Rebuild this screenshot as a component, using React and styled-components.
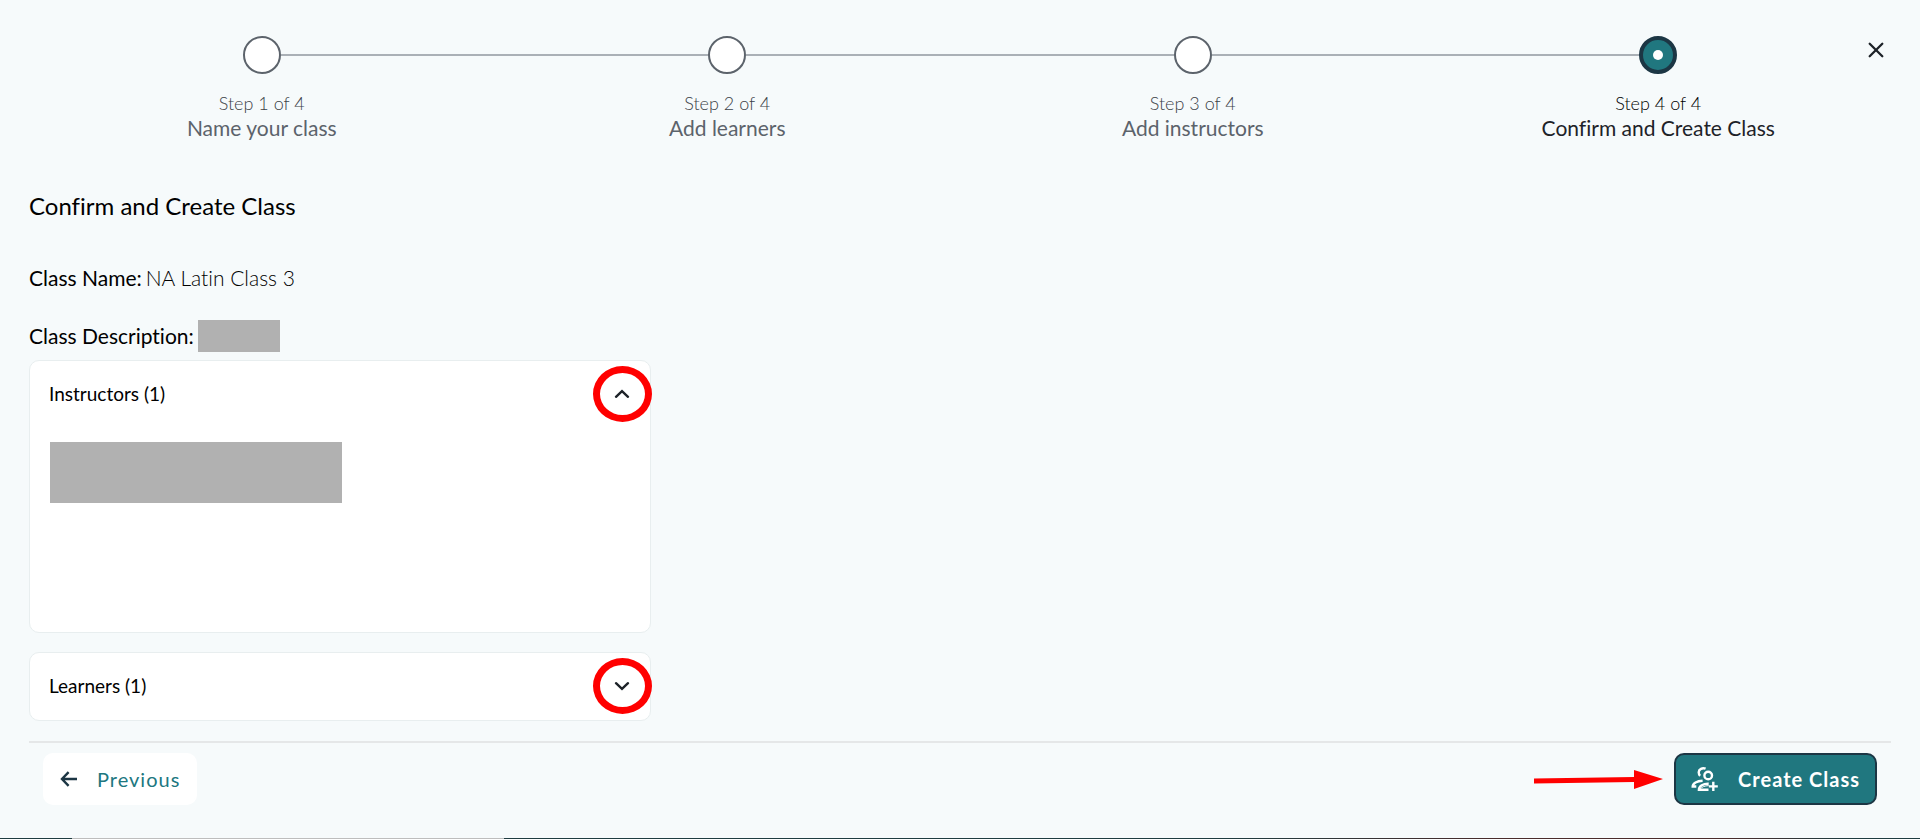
import styled, { createGlobalStyle } from "styled-components";
import { useState } from "react";

const steps = [
  "Name your class",
  "Add learners",
  "Add instructors",
  "Confirm and Create Class",
];

const CloseIcon = () => (
  <svg width="16" height="16" viewBox="0 0 16 16" fill="none" stroke="#1d2228" strokeWidth="2.3" strokeLinecap="round">
    <path d="M1.7 1.7 14.3 14.3M14.3 1.7 1.7 14.3" />
  </svg>
);

const ChevronIcon = ({ open }) => (
  <svg width="16" height="10" viewBox="0 0 16 10" fill="none" stroke="#1d2228" strokeWidth="2.4" strokeLinecap="round">
    <path d={open ? "M2 7.800 8 2.200 14 7.800" : "M2 2.200 8 7.800 14 2.200"} />
  </svg>
);

const BackIcon = () => (
  <svg width="18" height="16" viewBox="0 0 18 16" fill="none" stroke="#1c3644" strokeWidth="2.4">
    <path d="M17 8H2M8.600 1.200 2 8l6.600 6.800" />
  </svg>
);

const AddGroupIcon = () => (
  <svg width="28" height="26" viewBox="0 0 28 26" fill="none" stroke="#fff" strokeWidth="2.4">
    <circle cx="17.200" cy="9.500" r="3.800" />
    <path d="M14.600 2.700C11.300 1.400 7.800 3.300 7.700 6.300c0 1.400.4 2.500 1.400 3.500" />
    <path d="M11.600 14.700C6 15 1.700 17.300 1.700 20.500h3.600" />
    <path d="M17.700 17.800C12.300 17.600 7.900 19.800 7.900 23.700h9.600" />
    <path d="M9 23.300c1.400-2.300 4.700-3.500 8.700-3.700" strokeWidth="1" />
    <path d="M22.300 15.800v9.200M17.800 20.400h9" />
  </svg>
);

export default function App() {
  const [openPanels, setOpenPanels] = useState({ instructors: true, learners: false });

  const togglePanel = (name) =>
    setOpenPanels({ ...openPanels, [name]: !openPanels[name] });

  return (
    <>
      <GlobalStyle />
      <Page>
        <CloseButton type="button" aria-label="Close">
          <CloseIcon />
        </CloseButton>

        <Stepper>
          {steps.map((label, i) => {
            const active = i === steps.length - 1;
            return (
              <Step key={label} $active={active}>
                <StepTrack $first={i === 0} $last={active}>
                  <StepCircle $active={active} />
                </StepTrack>
                <StepCount $active={active}>
                  Step {i + 1} of {steps.length}
                </StepCount>
                <StepLabel>{label}</StepLabel>
              </Step>
            );
          })}
        </Stepper>

        <Title>Confirm and Create Class</Title>

        <Detail>
          <dt>Class Name:</dt>
          <dd>NA Latin Class 3</dd>
        </Detail>
        <Detail>
          <dt>Class Description:</dt>
          <Redacted as="dd" $width={82} $height={32} />
        </Detail>

        <Panels>
          <Panel>
            <PanelHeader
              type="button"
              aria-expanded={openPanels.instructors}
              onClick={() => togglePanel("instructors")}
            >
              Instructors (1)
              <Marker>
                <ChevronIcon open={openPanels.instructors} />
              </Marker>
            </PanelHeader>
            {openPanels.instructors ? (
              <PanelBody>
                <Redacted $width={292} $height={61} />
              </PanelBody>
            ) : null}
          </Panel>

          <Panel>
            <PanelHeader
              type="button"
              aria-expanded={openPanels.learners}
              onClick={() => togglePanel("learners")}
            >
              Learners (1)
              <Marker>
                <ChevronIcon open={openPanels.learners} />
              </Marker>
            </PanelHeader>
            {openPanels.learners ? <PanelBody /> : null}
          </Panel>
        </Panels>

        <Footer>
          <Button type="button">
            <BackIcon />
            Previous
          </Button>
          <CreateGroup>
            <svg width="130" height="22" viewBox="0 0 130 22" fill="#f00">
              <path d="M0 10.500 100 9V2l29 9-29 10v-7L0 15.500z" />
            </svg>
            <Button type="button" $primary>
              <AddGroupIcon />
              Create Class
            </Button>
          </CreateGroup>
        </Footer>
      </Page>
      <BottomEdge />
    </>
  );
}

const GlobalStyle = createGlobalStyle`
  * {
    box-sizing: border-box;
  }

  body {
    margin: 0;
    background-color: #f6fafb;
    color: #000;
    font-family: Lato, "Open Sans", sans-serif;
    font-size: 19px;
    font-variant-ligatures: none;
    line-height: 24px;
  }

  button {
    font: inherit;
    color: inherit;
    cursor: pointer;
  }
`;

const Page = styled.main`
  position: relative;
  padding: 36px 29px 33px;
`;

const CloseButton = styled.button`
  position: absolute;
  top: 34px;
  right: 28px;
  display: grid;
  place-items: center;
  width: 32px;
  height: 32px;
  padding: 0;
  border: none;
  background: none;
`;

const Stepper = styled.ol`
  display: grid;
  grid-template-columns: repeat(4, 1fr);
  margin: 0;
  padding: 0;
  list-style: none;
`;

const Step = styled.li`
  color: ${({ $active }) => ($active ? "#1d2228" : "#5c636b")};
  text-align: center;
`;

const StepTrack = styled.div`
  display: flex;
  align-items: center;
  margin-bottom: 17px;

  &::before,
  &::after {
    content: "";
    flex: 1;
    height: 2px;
    background-color: #aab0b6;
  }

  &::before {
    visibility: ${({ $first }) => ($first ? "hidden" : "visible")};
  }

  &::after {
    visibility: ${({ $last }) => ($last ? "hidden" : "visible")};
  }
`;

const StepCircle = styled.span`
  display: grid;
  place-items: center;
  width: 38px;
  height: 38px;
  border: ${({ $active }) => ($active ? "4px solid #1c3644" : "2px solid #5c636b")};
  border-radius: 50%;
  background-color: ${({ $active }) => ($active ? "#20777f" : "#fff")};

  &::after {
    content: "";
    width: 10px;
    height: 10px;
    border-radius: 50%;
    background-color: #fff;
  }
`;

const StepCount = styled.div`
  color: ${({ $active }) => ($active ? "#000" : "#3c4248")};
  font-size: 18px;
  font-weight: 300;
`;

const StepLabel = styled.div`
  font-size: 21px;
  line-height: 26px;
`;

const Title = styled.h1`
  margin: 49px 0 40px;
  font-size: 24px;
  font-weight: 400;
  line-height: 32px;
`;

const Detail = styled.dl`
  display: flex;
  align-items: center;
  gap: 4px;
  height: 32px;
  margin: 0 0 26px;
  font-size: 21px;

  dd {
    margin: 0;
    font-weight: 300;
  }

  & + & {
    margin-bottom: 8px;
  }
`;

const Redacted = styled.div`
  width: ${({ $width }) => $width}px;
  height: ${({ $height }) => $height}px;
  background-color: #b1b1b1;
`;

const Panels = styled.div`
  display: grid;
  gap: 19px;
  width: 33.4%;
  min-width: 400px;
`;

const Panel = styled.section`
  border: 1px solid #e8eeef;
  border-radius: 10px;
  background-color: #fff;
`;

const PanelHeader = styled.button`
  display: flex;
  align-items: center;
  justify-content: space-between;
  width: 100%;
  height: 67px;
  padding: 0 0 2px 19px;
  border: none;
  background: none;
`;

const Marker = styled.span`
  display: grid;
  place-items: center;
  width: 59px;
  height: 56px;
  margin-right: -2px;
  border: 7px solid #f00;
  border-radius: 50%;
`;

const PanelBody = styled.div`
  min-height: 204px;
  padding: 14px 20px;
`;

const Footer = styled.footer`
  display: flex;
  justify-content: space-between;
  margin-top: 20px;
  padding: 10px 14px 0;
  border-top: 2px solid #e5e7e8;
`;

const CreateGroup = styled.div`
  display: flex;
  align-items: center;
  gap: 10px;
`;

const Button = styled.button`
  display: flex;
  align-items: center;
  gap: 19px;
  height: 52px;
  padding: 0 15px;
  border: 2px solid ${({ $primary }) => ($primary ? "#1c3644" : "#fff")};
  border-radius: 10px;
  background-color: ${({ $primary }) => ($primary ? "#20777f" : "#fff")};
  color: ${({ $primary }) => ($primary ? "#fff" : "#20777f")};
  font-size: 20px;
  font-weight: ${({ $primary }) => ($primary ? 700 : 400)};
  letter-spacing: 1px;
`;

const BottomEdge = styled.div`
  height: 1px;
  background: linear-gradient(
    to right,
    #1f3c40 72px,
    #bdbdbd 72px 504px,
    #1f3c40 504px 64%,
    #4a2c2c 78% 90%,
    #1f3c40 96%
  );
`;
